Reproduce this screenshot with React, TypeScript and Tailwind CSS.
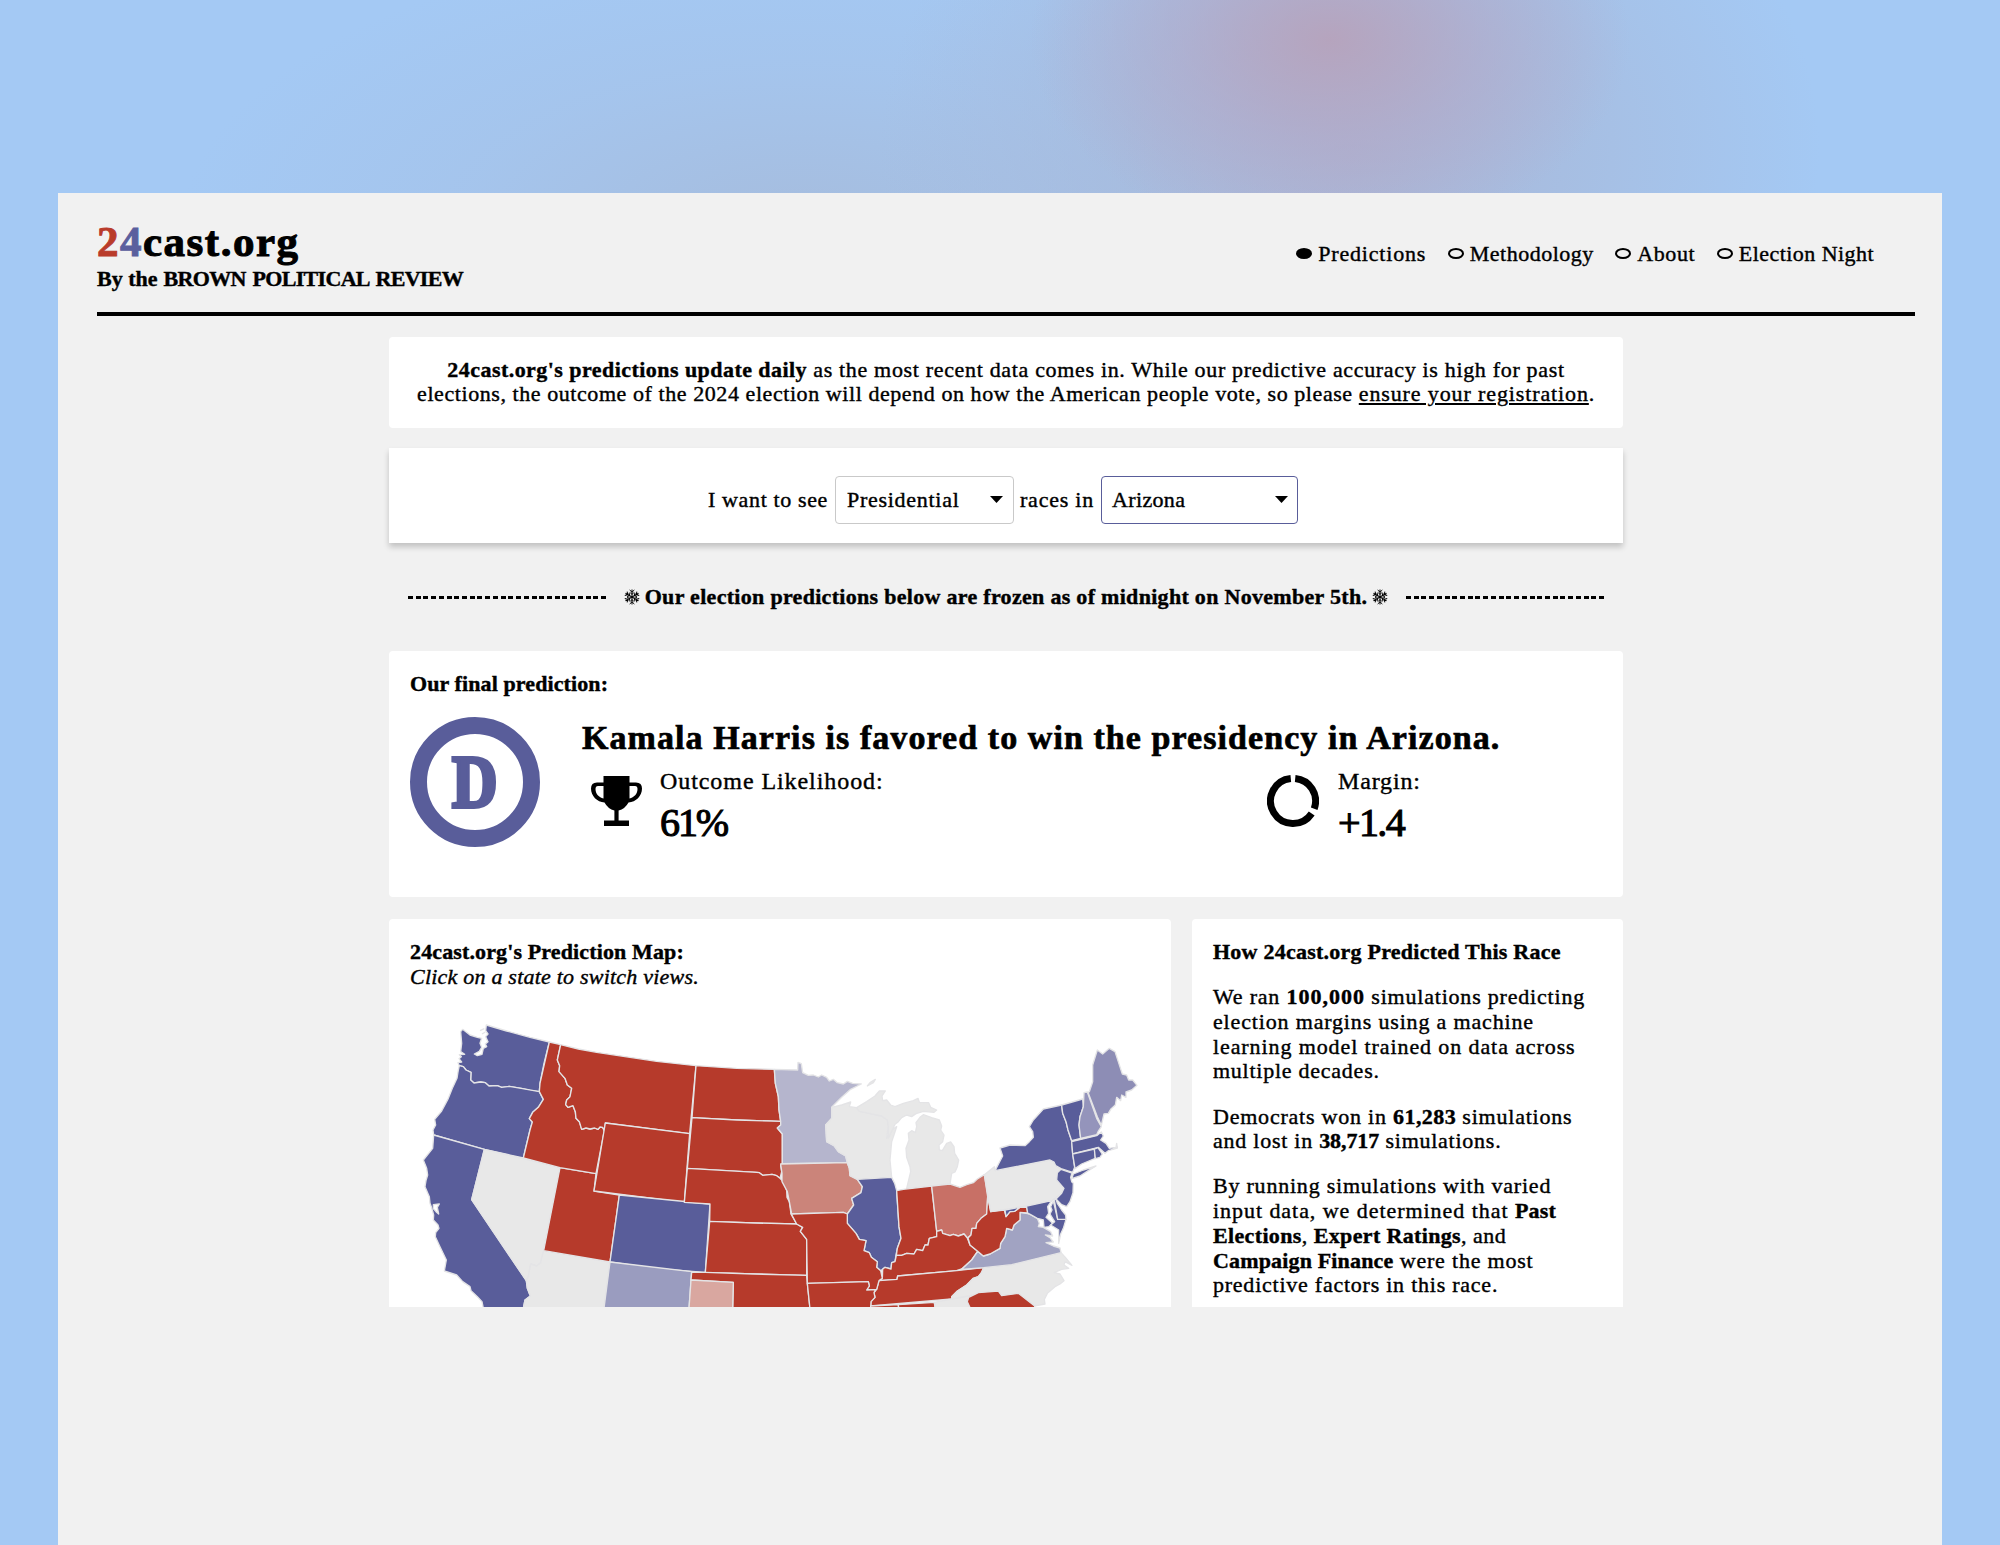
import type { ReactNode } from "react";

const BLUE = "#595d9a";
const RED = "#b63a2b";
const GRAY = "#e8e8e8";

type Shape = { id: string; d: string; fill: string };

const west: Shape[] = [
  { id: "WA", fill: BLUE, d: "M289 345L350 363L420 382L478 396L462 460L450 520L448 545L420 541L398 536L358 529L335 532L322 527L297 528L286 518L272 516L252 519L242 510L243 487L228 480L220 470L208 467L204 458L215 456L207 446L214 440L208 434L224 433L212 425L215 400L212 365L218 358L240 375L262 382L275 385L270 400L275 412L268 424L253 432L262 437L276 433L280 415L290 410L286 402L294 395L287 380L294 372L287 362Z" },
  { id: "OR", fill: BLUE, d: "M208 467L220 470L228 480L243 487L242 510L252 519L272 516L286 518L297 528L322 527L335 532L358 529L398 536L448 545L460 568L445 592L428 607L418 626L427 636L420 660L400 744L283 718L131 675L129 660L137 645L134 628L155 603L175 565L187 535L201 505L205 480Z" },
  { id: "CA", fill: BLUE, d: "M131 675L283 718L245 869L409 1112L412 1135L421 1158L405 1170L400 1195L280 1195L276 1175L262 1160L243 1142L240 1130L218 1115L200 1095L163 1083L169 1050L150 1010L136 980L137 968L147 955L144 945L130 930L131 915L124 890L120 880L118 860L105 830L108 812L113 795L110 775L100 750L128 715Z" },
  { id: "NV", fill: GRAY, d: "M283 718L510 773L461 1022L452 1058L440 1068L422 1062L415 1100L409 1112L245 869Z" },
  { id: "AZ", fill: GRAY, d: "M461 1022L660 1056L642 1195L400 1195L405 1170L421 1158L412 1135L409 1112L415 1100L422 1062L440 1068L452 1058Z" },
  { id: "UT", fill: RED, d: "M510 773L618 791L612 843L688 855L660 1056L461 1022Z" },
  { id: "ID", fill: RED, d: "M478 396L512 404L502 450L509 467L507 485L525 505L532 525L545 535L540 560L530 570L527 584L534 592L549 587L556 605L558 625L568 635L575 658L588 654L600 657L614 654L624 658L630 651L638 652L643 662L618 791L510 773L400 744L420 660L427 636L418 626L428 607L445 592L460 568L448 545L450 520Z" },
  { id: "MT", fill: RED, d: "M512 404L565 417L620 427L700 439L800 454L918 467L899 671L646 639L643 662L638 652L630 651L624 658L614 654L600 657L588 654L575 658L568 635L558 625L556 605L549 587L534 592L527 584L530 570L540 560L545 535L532 525L525 505L507 485L509 467L502 450Z" },
  { id: "WY", fill: RED, d: "M646 639L899 671L883 877L612 843Z" },
  { id: "CO", fill: BLUE, d: "M688 855L960 882L946 1087L800 1076L660 1056Z" },
  { id: "NM", fill: "#9a9cbf", d: "M660 1056L905 1085L897 1195L642 1195Z" },
  { id: "ND", fill: RED, d: "M918 467L1040 475L1153 478L1156 520L1165 560L1167 600L1172 634L1040 630L906 623Z" },
  { id: "SD", fill: RED, d: "M906 623L1040 630L1172 634L1172 645L1162 654L1177 672L1177 760L1172 766L1175 785L1170 805L1160 797L1146 793L1118 796L1108 788L1100 787L892 775Z" },
  { id: "NE", fill: RED, d: "M892 775L1100 787L1108 788L1118 796L1146 793L1160 797L1170 805L1180 815L1190 840L1191 862L1198 875L1203 912L1220 942L1090 939L959 934L960 882L883 877Z" },
  { id: "KS", fill: RED, d: "M959 934L1090 939L1220 942L1238 952L1231 964L1250 988L1250 1096L1090 1092L946 1087Z" },
  { id: "OK", fill: RED, d: "M905 1087L946 1087L1090 1092L1250 1096L1252 1120L1260 1196L1028 1196L1030 1117L903 1110Z" },
  { id: "TX", fill: "#d9a7a0", d: "M903 1110L1030 1117L1028 1196L897 1196Z" },
];

const east: Shape[] = [
  { id: "MN", fill: "#b5b5cd", d: "M43 178L113 180L114 157L124 161L128 188L145 196L160 195L175 201L185 195L200 202L208 213L220 208L232 218L250 222L262 214L278 220L304 222L272 238L245 262L215 292L215 325L197 345L200 395L222 407L235 425L257 438L262 458L67 461L67 372L52 354L62 345L62 334L57 300L55 260L46 220Z" },
  { id: "IA", fill: "#cb847a", d: "M62 462L262 458L268 475L270 497L292 508L307 530L303 548L275 565L281 585L262 612L250 607L95 612L88 575L82 545L66 515L66 490Z" },
  { id: "WI", fill: GRAY, d: "M215 292L245 285L272 276L268 290L290 293L298 304L365 318L382 330L385 350L380 385L398 358L410 350L395 395L390 450L395 502L292 508L270 497L268 475L262 458L257 438L235 425L222 407L200 395L197 345L215 325Z" },
  { id: "UP", fill: GRAY, d: "M290 293L320 275L345 258L358 243L376 243L366 258L368 272L380 270L392 285L405 290L430 280L460 272L474 265L478 277L506 278L512 292L530 300L522 307L490 304L468 311L455 320L440 315L425 323L415 335L405 343L385 385L385 350L382 330L365 318L298 304Z" },
  { id: "MI", fill: GRAY, d: "M480 322L490 314L515 323L538 330L545 348L542 360L552 375L548 395L537 405L538 420L547 422L560 400L572 396L582 410L584 430L596 450L592 470L585 486L575 490L570 522L515 528L440 535L452 485L450 470L440 442L438 415L447 390L445 370L455 362L466 368L470 350L468 338Z" },
  { id: "IR", fill: GRAY, d: "M322 228L330 218L346 208L340 218Z" },
  { id: "IL", fill: BLUE, d: "M292 508L395 502L404 520L410 542L417 650L423 685L412 715L408 735L405 755L395 758L393 777L375 772L362 782L350 772L352 755L334 742L328 728L312 722L318 692L298 688L288 670L262 640L262 612L281 585L275 565L303 548L307 530Z" },
  { id: "IN", fill: RED, d: "M410 542L430 538L515 528L530 662L530 680L508 685L504 705L495 705L488 722L470 718L462 732L440 730L425 736L409 736L412 715L423 685L417 650Z" },
  { id: "OH", fill: "#c87066", d: "M515 528L570 522L600 532L620 524L640 518L652 507L673 494L683 560L681 595L680 612L663 625L650 640L648 655L636 655L633 675L622 684L612 672L595 678L580 673L570 677L548 670L545 660L530 664Z" },
  { id: "KY", fill: RED, d: "M409 736L425 736L440 730L462 732L470 718L488 722L495 705L504 705L508 685L530 680L530 664L545 660L548 670L570 677L580 673L595 678L612 672L622 684L630 705L653 724L635 750L605 777L590 782L413 798L411 808L357 812L367 805L368 778L375 772L393 777L395 758L405 755Z" },
  { id: "TN", fill: RED, d: "M357 812L411 808L413 798L590 782L671 773L665 787L655 800L640 805L620 825L605 835L590 845L575 860L575 867L332 888L333 875L345 862L342 848L350 838Z" },
  { id: "MO", fill: RED, d: "M95 612L250 607L262 612L262 640L288 670L298 688L318 692L312 722L328 728L334 742L352 755L350 772L362 782L367 805L357 812L350 838L320 840L328 828L325 815L142 820L140 688L121 664L128 652L110 642L93 610Z" },
  { id: "AR", fill: RED, d: "M142 820L325 815L328 828L320 840L347 839L342 848L345 862L333 875L332 897L150 897Z" },
  { id: "MS", fill: RED, d: "M332 888L415 884L416 897L332 897Z" },
  { id: "AL", fill: RED, d: "M415 884L523 877L526 897L416 897Z" },
  { id: "GA", fill: GRAY, d: "M523 877L575 867L640 855L622 872L626 885L632 897L526 897Z" },
  { id: "NC", fill: GRAY, d: "M671 773L755 764L903 728L916 742L936 766L915 755L912 765L926 775L905 778L882 788L900 792L912 812L900 822L885 830L862 850L853 868L855 882L822 888L775 850L725 857L715 843L655 848L622 872L640 855L575 867L575 860L590 845L620 825L640 805L655 800L665 787Z" },
  { id: "SC", fill: RED, d: "M622 875L626 862L655 848L715 843L725 857L775 850L824 888L824 897L632 897Z" },
  { id: "VA", fill: "#a1a3c2", d: "M605 778L635 750L653 724L670 738L690 732L720 715L722 700L735 680L740 655L757 660L762 645L780 630L780 607L803 611L812 614L832 625L838 640L835 650L850 652L872 665L878 678L856 675L870 683L880 696L858 698L880 708L900 714L903 728L755 764L671 773Z" },
  { id: "WV", fill: RED, d: "M683 560L692 605L733 600L738 620L750 605L764 604L780 592L800 591L803 609L780 607L780 630L762 645L757 660L740 655L735 680L722 700L720 715L690 732L670 738L653 724L630 705L624 684L633 675L636 655L648 655L650 640L663 625L680 612Z" },
  { id: "PA", fill: GRAY, d: "M673 494L703 470L705 482L870 450L882 456L887 467L903 476L892 488L890 510L912 535L905 550L885 565L875 572L800 588L692 605Z" },
  { id: "NY", fill: BLUE, d: "M705 482L728 438L720 414L750 405L795 407L808 395L820 382L818 365L808 350L820 330L850 297L905 285L908 310L918 335L924 360L935 392L938 432L944 472L938 487L903 476L887 467L882 456L870 450Z" },
  { id: "LI", fill: BLUE, d: "M935 506L940 492L970 480L1008 468L985 482L960 498Z" },
  { id: "NJ", fill: BLUE, d: "M903 478L936 489L932 502L935 515L940 520L939 548L930 575L920 590L905 584L888 567L905 550L912 535L890 510L892 488Z" },
  { id: "VT", fill: BLUE, d: "M905 285L968 267L970 290L960 320L957 345L962 385L935 392L924 360L918 335L908 310Z" },
  { id: "NH", fill: "#9494bb", d: "M972 248L982 246L1010 325L1024 350L1014 365L1010 374L962 385L957 345L960 320L970 290Z" },
  { id: "ME", fill: "#8d8db5", d: "M988 245L998 215L998 165L1012 120L1028 132L1048 115L1065 125L1087 192L1100 195L1106 210L1118 210L1131 226L1115 240L1098 246L1098 262L1085 255L1082 272L1070 262L1066 285L1052 298L1045 310L1032 312L1024 346L1012 320L984 247Z" },
  { id: "MA", fill: BLUE, d: "M935 395L1010 377L1024 366L1030 378L1022 390L1038 400L1048 415L1068 412L1070 400L1072 414L1045 422L1035 430L1015 412L938 432Z" },
  { id: "CT", fill: BLUE, d: "M938 432L1003 417L1006 445L965 462L945 476Z" },
  { id: "RI", fill: BLUE, d: "M1003 417L1014 413L1022 425L1027 432L1020 442L1006 446Z" },
  { id: "MD", fill: BLUE, d: "M735 600L800 588L875 572L863 590L866 610L858 622L878 640L866 650L852 652L850 630L832 625L812 614L803 609L800 591L780 592L764 604L750 605L738 620Z" },
  { id: "ES", fill: BLUE, d: "M880 573L893 628L918 628L910 655L902 672L896 700L896 660L872 645L884 635L870 612L876 600L872 590Z" },
  { id: "DE", fill: BLUE, d: "M883 570L888 567L892 580L905 600L917 615L918 628L893 628Z" },
];

function PredictionMap() {
  return (
    <svg viewBox="-3 303 2346 888" className="mt-auto block h-[296px] w-full" strokeLinejoin="round" stroke="#e4e4e6" strokeWidth="4">
      {west.map((s) => (
        <path key={s.id} d={s.d} fill={s.fill} />
      ))}
      {/* San Francisco Bay */}
      <path d="M130 884L148 882L142 892L146 912L138 905L130 896Z" fill="#fff" />
      {/* Puget Sound islands */}
      <path d="M270 362L283 356M276 372L286 366" fill="none" />
      <g transform="translate(1110 300)">
        {east.map((s) => (
          <path key={s.id} d={s.d} fill={s.fill} />
        ))}
      </g>
    </svg>
  );
}

function Caret() {
  return (
    <svg viewBox="0 0 13 7" className="h-[7px] w-[13px]">
      <path d="M0 0h13L6.5 7z" />
    </svg>
  );
}

function NavItem({ children, active, className }: { children: ReactNode; active?: boolean; className: string }) {
  return (
    <a className={`flex items-center leading-6 ${className}`}>
      <span className={`mr-1.5 h-[11px] w-4 rounded-[50%] border-2 border-black ${active ? "bg-black" : ""}`} />
      {children}
    </a>
  );
}

function Dashes() {
  return <span className="h-[3px] w-[198px] bg-[repeating-linear-gradient(90deg,#000_0_5px,transparent_5px_7.72px)]" />;
}

function Snow() {
  return (
    <svg viewBox="-8 -8 16 16" className="size-4" fill="none" stroke="#000" strokeWidth="1">
      {[0, 60, 120, 180, 240, 300].map((a) => (
        <path key={a} transform={`rotate(${a})`} d="M0 0V-7.500M-2.300 -7L0 -4.800L2.300 -7M-2 -4.600L0 -2.600L2 -4.600" />
      ))}
    </svg>
  );
}

function Line({ children, className = "" }: { children: ReactNode; className?: string }) {
  return <span className={`block ${className}`}>{children}</span>;
}

const B = ({ children, className = "" }: { children: ReactNode; className?: string }) => (
  <strong className={`font-bold ${className}`}>{children}</strong>
);

export default function App() {
  return (
    <div className="h-[1545px] w-[2000px] overflow-hidden whitespace-nowrap bg-[#a4c9f4] bg-[radial-gradient(ellipse_300px_200px_at_1330px_40px,rgba(184,160,184,0.85),rgba(180,165,195,0.5)_50%,transparent),radial-gradient(ellipse_470px_380px_at_1350px_150px,rgba(172,178,208,0.85),rgba(168,184,216,0.6)_50%,transparent),radial-gradient(ellipse_620px_290px_at_800px_230px,rgba(166,184,214,0.75),rgba(166,190,225,0.4)_55%,transparent)] pt-[193px] font-['Liberation_Serif',serif] text-[22px] text-black [-webkit-text-stroke:0.4px]">
      <div className="mx-[58px] h-[1352px] bg-[#f1f1f1]">
        <header className="ml-[39px] mr-[27px] flex h-[123px] justify-between border-b-4 border-black pt-[27px]">
          <div className="font-bold">
            <h1 className="text-[43px] leading-[43px] tracking-[1.5px] [-webkit-text-stroke:1px]">
              <span className="text-[#b93b2b]">2</span>
              <span className="text-[#5b5f9e]">4</span>cast.org
            </h1>
            <p className="mt-[5px] flex leading-[22px]">
              By the <span className="ml-[6px] tracking-[-0.68px] [word-spacing:2px]">BROWN POLITICAL REVIEW</span>
            </p>
          </div>
          <nav className="mr-[41px] flex items-start gap-[21.5px] pt-[21.5px]">
            <NavItem active className="tracking-[0.82px]">Predictions</NavItem>
            <NavItem className="tracking-[0.5px]">Methodology</NavItem>
            <NavItem className="tracking-[0.6px]">About</NavItem>
            <NavItem className="tracking-[0.45px]">Election Night</NavItem>
          </nav>
        </header>

        <main className="ml-[331px] mt-[21px] w-[1234px]">
          <section className="h-[91px] rounded bg-white pt-[20.5px] text-center leading-[24.5px]">
            <Line className="tracking-[0.67px]">
              <B className="tracking-[0.45px]">24cast.org's predictions update daily</B> as the most recent data comes in. While our predictive accuracy is high for past
            </Line>
            <Line className="tracking-[0.57px]">
              elections, the outcome of the 2024 election will depend on how the American people vote, so please{" "}
              <a className="tracking-[0.88px] underline decoration-[1.5px] underline-offset-[2px]">ensure your registration</a>.
            </Line>
          </section>

          <section className="mt-5 flex h-[95px] items-center bg-white pb-px pl-[319px] pt-[9px] shadow-[0_4px_6px_rgba(0,0,0,0.2)]">
            <span className="w-[127px] tracking-[0.63px]">I want to see</span>
            <div className="flex h-12 w-[179px] items-center justify-between rounded-sm border border-[#c9c9c9] pl-[11px] pr-[10px] tracking-[0.72px]">
              Presidential <Caret />
            </div>
            <span className="ml-[6px] w-[81px] tracking-[0.78px]">races in</span>
            <div className="flex h-12 w-[197px] items-center justify-between rounded-sm border border-[#595d9a] pl-[10px] pr-[9px] tracking-[0.35px]">
              Arizona <Caret />
            </div>
          </section>

          <section className="mt-[42px] flex h-6 items-center justify-between px-[19px] font-bold leading-6 tracking-[0.3px]">
            <Dashes />
            <span className="flex items-center gap-[5px]">
              <Snow />
              <span>Our election predictions below are frozen as of midnight on November 5th.</span>
              <Snow />
            </span>
            <Dashes />
          </section>

          <section className="mt-[42px] h-[246px] rounded bg-white pl-[21px] pt-[21px]">
            <h2 className="font-bold leading-6 tracking-[0.1px]">Our final prediction:</h2>
            <div className="mt-[21px] flex">
              <div className="flex size-[130px] items-center justify-center rounded-full border-[17px] border-[#595d9a] text-[74px] font-bold leading-none text-[#595d9a] [-webkit-text-stroke:4px]">
                <span className="scale-x-[0.85]">D</span>
              </div>
              <div className="ml-[42px]">
                <h3 className="pt-px text-[34px] font-bold leading-[39px] tracking-[1.07px] [-webkit-text-stroke:0.7px]">Kamala Harris is favored to win the presidency in Arizona.</h3>
                <div className="mt-[9.5px] flex">
                  <svg viewBox="0 0 51 50" className="ml-[9px] mt-[9px] h-[50px] w-[51px]">
                    <path d="M12.500 0h26v6.500h6.500q6 0 6 6C51 20 45 26 37.500 26.500Q34 33 27.600 34.500v10H38V50H13v-5.500h10.400v-10Q17 33 13.500 26.500C6 26 0 20 0 12.500q0-6 6-6h6.500zM12.500 10H7Q4.500 10 4.500 13C4.500 18 8 21.500 12.500 22.500zM38.500 10v12.500C43 21.500 46.500 18 46.500 13Q46.500 10 44 10z" fillRule="evenodd" />
                  </svg>
                  <div className="ml-[18px] w-[607px]">
                    <p className="text-[24px] leading-7 tracking-[0.93px]">Outcome Likelihood:</p>
                    <p className="mt-2 text-[40px] leading-10 tracking-[-2.1px] [-webkit-text-stroke:1.1px]">61%</p>
                  </div>
                  <svg viewBox="0 0 52 52" className="mt-2 size-[52px]" fill="none" stroke="#000" strokeWidth="7">
                    <path d="M28.200 3.600A22.500 22.500 0 0 1 47.200 33.700M44.700 38.500A22.500 22.500 0 1 1 23.800 3.600" />
                  </svg>
                  <div className="ml-[19px]">
                    <p className="text-[24px] leading-7 tracking-[0.85px]">Margin:</p>
                    <p className="mt-2 text-[40px] leading-10 tracking-[-1.64px] [-webkit-text-stroke:1.1px]">+1.4</p>
                  </div>
                </div>
              </div>
            </div>
          </section>

          <div className="mt-[22px] flex h-[388px] justify-between">
            <section className="flex w-[782px] flex-col rounded-t bg-white pt-[21px] leading-[24.6px]">
              <h2 className="pl-[21px] font-bold tracking-[0.13px]">24cast.org's Prediction Map:</h2>
              <p className="pl-[21px] italic tracking-[0.22px]">Click on a state to switch views.</p>
              <PredictionMap />
            </section>
            <section className="w-[431px] rounded-t bg-white pl-[21px] pt-[21px] leading-[24.7px]">
              <h2 className="font-bold tracking-[0.24px]">How 24cast.org Predicted This Race</h2>
              <p className="mt-[20.5px]">
                <Line className="tracking-[0.8px]">We ran <B className="tracking-[1px]">100,000</B> simulations predicting</Line>
                <Line className="tracking-[0.84px]">election margins using a machine</Line>
                <Line className="tracking-[0.9px]">learning model trained on data across</Line>
                <Line className="tracking-[0.75px]">multiple decades.</Line>
              </p>
              <p className="mt-[20.5px]">
                <Line className="tracking-[0.78px]">Democrats won in <B className="tracking-[0.42px]">61,283</B> simulations</Line>
                <Line className="tracking-[0.75px]">and lost in <B className="tracking-[-0.08px]">38,717</B> simulations.</Line>
              </p>
              <p className="mt-[20.5px]">
                <Line className="tracking-[0.78px]">By running simulations with varied</Line>
                <Line className="tracking-[0.95px]">input data, we determined that <B className="tracking-[0.2px]">Past</B></Line>
                <Line className="tracking-[0.5px]"><B className="tracking-[0.35px]">Elections</B>, <B className="tracking-[0.35px]">Expert Ratings</B>, and</Line>
                <Line className="tracking-[0.8px]"><B className="tracking-[0.16px]">Campaign Finance</B> were the most</Line>
                <Line className="tracking-[0.76px]">predictive factors in this race.</Line>
              </p>
            </section>
          </div>
        </main>
      </div>
    </div>
  );
}
